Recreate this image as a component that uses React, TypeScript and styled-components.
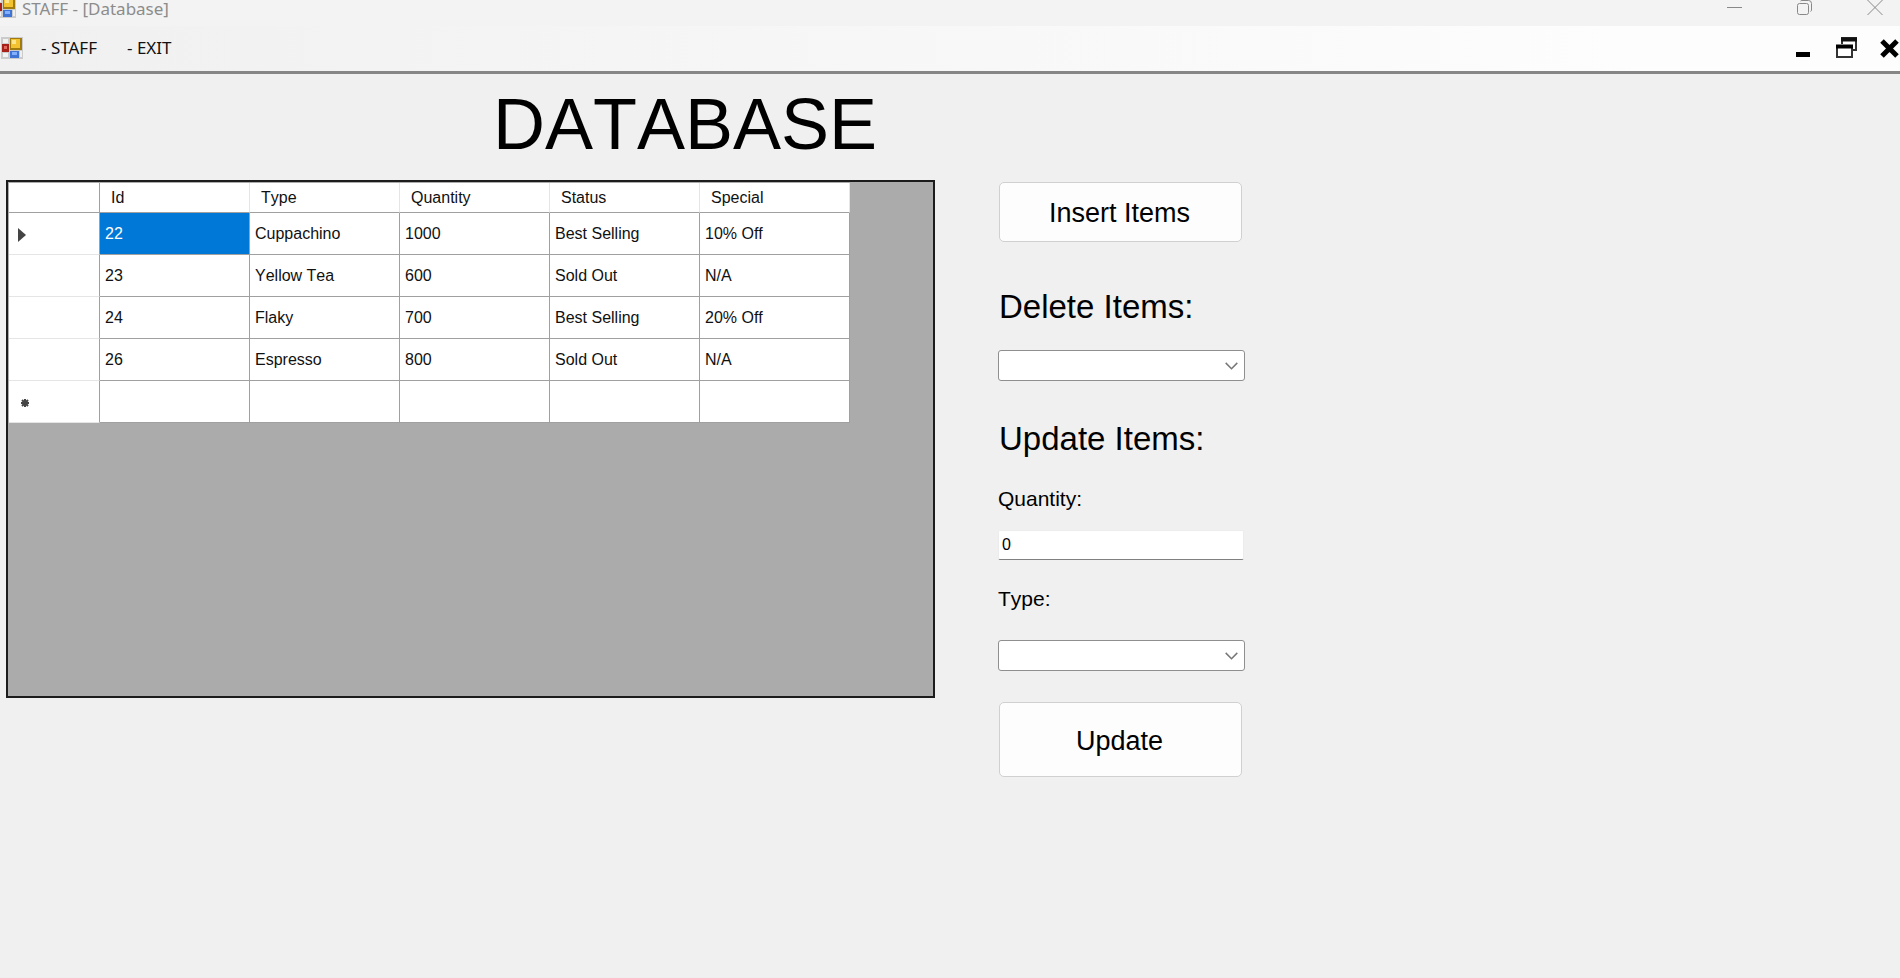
import React from "react";
import styled, { createGlobalStyle } from "styled-components";

const sans = `"Liberation Sans", Arial, sans-serif`;
const ui = `"Noto Sans", "Open Sans", sans-serif`;

const GlobalStyle = createGlobalStyle`
  *, *::before, *::after { box-sizing: border-box; }
  body { margin: 0; background: #f0f0f0; color: #000; font-family: ${sans}; font-kerning: none; }
  button, input, select { font: inherit; color: inherit; font-kerning: inherit; }
`;

const Window = styled.div`
  min-height: 100vh;
  background: #f0f0f0;
`;

const TitleBar = styled.header`
  display: flex;
  align-items: flex-start;
  height: 26px;
  padding-right: 17px;
  background: #f3f3f3;
`;

const TitleIcon = styled.span`
  display: flex;
  margin: -4px 6px 0 -6px;
`;

const WindowTitle = styled.span`
  flex: 1;
  font: 17px/18px ${ui};
  color: #8c8c8c;
`;

const Controls = styled.div<{ $gap: number }>`
  display: flex;
  align-items: flex-start;
  gap: ${({ $gap }) => $gap}px;
  margin-left: auto;
`;

const IconButton = styled.button`
  display: flex;
  padding: 0;
  border: 0;
  background: none;
`;

const MenuBar = styled.nav`
  display: flex;
  align-items: center;
  height: 48px;
  padding: 0 1px 2px;
  background: linear-gradient(to right, #f0f0f0, #fdfdfd 86%);
  border-bottom: 3px solid #868686;
`;

const MenuLink = styled.a`
  margin-left: 18px;
  padding-right: 6px;
  font: 17px/22px ${ui};
  color: #111;
  text-decoration: none;
  & + & {
    margin-left: 24px;
  }
`;

const Heading = styled.h1`
  margin: 0;
  padding: 9px 0 15px 493px;
  font-size: 72px;
  font-weight: 400;
  line-height: 82px;
`;

const Content = styled.main`
  display: grid;
  grid-template-columns: minmax(0, 929px) 247px;
  column-gap: 63px;
  align-items: start;
  padding: 0 6px;
`;

const GridPanel = styled.section`
  min-height: 518px;
  border: 2px solid #1c1c1c;
  padding: 1px;
  background: #ababab;
`;

const DataTable = styled.table`
  border-collapse: separate;
  border-spacing: 0;
  table-layout: fixed;
  width: 841px;
  background: #fff;
  font-size: 16px;
  line-height: 20px;
  color: #111;
`;

const ColumnHeader = styled.th<{ $corner?: boolean }>`
  width: ${({ $corner }) => ($corner ? 91 : 150)}px;
  height: 30px;
  padding: 1px 0 0 11px;
  border-right: 1px solid ${({ $corner }) => ($corner ? "#a0a0a0" : "#e5e5e5")};
  border-bottom: 1px solid #a0a0a0;
  font-weight: 400;
  text-align: left;
`;

const RowHeader = styled.th`
  height: 42px;
  padding: 2px 0 0 8px;
  border-right: 1px solid #a0a0a0;
  border-bottom: 1px solid #e5e5e5;
  text-align: left;
  svg {
    display: block;
  }
`;

const Cell = styled.td<{ $selected?: boolean }>`
  height: 42px;
  padding: 1px 0 0 5px;
  border-right: 1px solid #a0a0a0;
  border-bottom: 1px solid #a0a0a0;
  background: ${({ $selected }) => ($selected ? "#0078d7" : "#fff")};
  color: ${({ $selected }) => ($selected ? "#fff" : "inherit")};
`;

const Form = styled.form`
  display: flex;
  flex-direction: column;
  padding-top: 2px;
`;

const PushButton = styled.button<{ $height: number }>`
  height: ${({ $height }) => $height}px;
  margin: 0 3px 0 1px;
  padding: 2px 2px 0 0;
  border: 1px solid #d0d0d0;
  border-radius: 5px;
  background: #fdfdfd;
  font-size: 27px;
  line-height: 32px;
`;

const Field = styled.div<{ $top: number; $gap: number }>`
  display: flex;
  flex-direction: column;
  gap: ${({ $gap }) => $gap}px;
  margin-top: ${({ $top }) => $top}px;
`;

const SectionLabel = styled.label`
  padding-left: 1px;
  font-size: 33px;
  line-height: 38px;
`;

const SectionTitle = styled.h2`
  margin: 39px 0 0;
  padding-left: 1px;
  font-size: 33px;
  font-weight: 400;
  line-height: 38px;
`;

const FieldLabel = styled.label`
  font-size: 21px;
  line-height: 24px;
`;

const SelectBox = styled.div`
  position: relative;
  display: flex;
  svg {
    position: absolute;
    right: 7px;
    top: 12px;
    pointer-events: none;
  }
`;

const Select = styled.select`
  width: 100%;
  height: 31px;
  padding: 0 28px 0 4px;
  appearance: none;
  border: 1px solid #8f8f8f;
  border-radius: 3px;
  background: #fff;
  font-size: 16px;
`;

const TextInput = styled.input`
  height: 30px;
  margin: 0 1px 0 0;
  padding: 0 3px;
  border: 1px solid #ececec;
  border-bottom: 1px solid #808080;
  border-radius: 2px;
  background: #fff;
  font-size: 16px;
`;

const FormIcon = () => (
  <svg width="22" height="22" viewBox="0 0 22 22" aria-hidden="true">
    <rect width="22" height="22" fill="#cbcbcb" />
    <path d="M2 2h5v4H2zM2 16h5v4H2z" fill="#f2f2f2" />
    <rect x="1" y="7" width="7" height="8" fill="#a8201a" />
    <rect x="3" y="9" width="3" height="3" fill="#e0685c" />
    <rect x="9" y="1" width="12" height="12" fill="#a07c10" />
    <rect x="10" y="2" width="9" height="9" fill="#f3c230" />
    <rect x="11" y="3" width="4" height="4" fill="#ffe58a" />
    <rect x="9" y="14" width="9" height="7" fill="#3f74d4" />
    <rect x="11" y="15" width="5" height="3" fill="#82b0ff" />
    <path d="M19 14h2v6h-2z" fill="#efefef" />
  </svg>
);

const Chevron = () => (
  <svg width="13" height="8" viewBox="0 0 13 8" fill="none" stroke="#777" strokeWidth="1.5" aria-hidden="true">
    <path d="M.7.9l5.8 5.8L12.3.9" />
  </svg>
);

const columns = ["Id", "Type", "Quantity", "Status", "Special"];
const rows = [
  ["22", "Cuppachino", "1000", "Best Selling", "10% Off"],
  ["23", "Yellow Tea", "600", "Sold Out", "N/A"],
  ["24", "Flaky", "700", "Best Selling", "20% Off"],
  ["26", "Espresso", "800", "Sold Out", "N/A"],
  ["", "", "", "", ""],
];

const RowMarker = ({ index }: { index: number }) => {
  if (index === 0)
    return (
      <svg width="12" height="14" viewBox="0 0 12 14" aria-hidden="true">
        <path d="M1 0v14l8-7z" fill="#444" />
      </svg>
    );
  if (index === rows.length - 1)
    return (
      <svg width="16" height="10" viewBox="0 0 16 10" stroke="#444" strokeWidth="2" aria-hidden="true">
        <path d="M8 1v8M4 5h8M5 2l6 6M11 2L5 8" />
      </svg>
    );
  return null;
};

export default function App() {
  return (
    <Window>
      <GlobalStyle />
      <TitleBar>
        <TitleIcon><FormIcon /></TitleIcon>
        <WindowTitle>STAFF - [Database]</WindowTitle>
        <Controls $gap={54}>
          <IconButton aria-label="Minimize window">
            <svg width="16" height="16" stroke="#888"><path d="M0 7.5h15" /></svg>
          </IconButton>
          <IconButton aria-label="Restore window">
            <svg width="16" height="16" fill="none" stroke="#888">
              <rect x=".5" y="3.5" width="11" height="11" rx="2" />
              <path d="M3.5 1Q4 .5 5 .5h6.5q3 0 3 3V10q0 1-1 1.5" />
            </svg>
          </IconButton>
          <IconButton aria-label="Close window">
            <svg width="16" height="16" stroke="#888"><path d="M.5 0l15 15M15.5 0l-15 15" /></svg>
          </IconButton>
        </Controls>
      </TitleBar>
      <MenuBar>
        <FormIcon />
        <MenuLink href="#staff">- STAFF</MenuLink>
        <MenuLink href="#exit">- EXIT</MenuLink>
        <Controls $gap={22}>
          <IconButton aria-label="Minimize form">
            <svg width="20" height="22"><rect x="2" y="15" width="14" height="5" fill="#000" /></svg>
          </IconButton>
          <IconButton aria-label="Restore form">
            <svg width="22" height="22" fill="none" stroke="#333" strokeWidth="2">
              <path d="M6 7V1h14v12h-4" />
              <path d="M5 2.5h16" stroke="#111" strokeWidth="4" />
              <rect x="1" y="9" width="15" height="11" fill="#fff" />
              <path d="M0 9.5h17" stroke="#000" strokeWidth="4" />
            </svg>
          </IconButton>
          <IconButton aria-label="Close form">
            <svg width="19" height="22" stroke="#000" strokeWidth="5"><path d="M2 4l15 15M17 4L2 19" /></svg>
          </IconButton>
        </Controls>
      </MenuBar>
      <Heading>DATABASE</Heading>
      <Content>
        <GridPanel aria-label="Items">
          <DataTable>
            <thead>
              <tr>
                <ColumnHeader $corner aria-label="Row" />
                {columns.map((name) => (
                  <ColumnHeader key={name} scope="col">{name}</ColumnHeader>
                ))}
              </tr>
            </thead>
            <tbody>
              {rows.map((row, r) => (
                <tr key={r}>
                  <RowHeader scope="row"><RowMarker index={r} /></RowHeader>
                  {row.map((value, c) => (
                    <Cell key={c} $selected={r === 0 && c === 0}>{value}</Cell>
                  ))}
                </tr>
              ))}
            </tbody>
          </DataTable>
        </GridPanel>
        <Form onSubmit={(e) => e.preventDefault()}>
          <PushButton type="button" $height={60}>Insert Items</PushButton>
          <Field $top={46} $gap={24}>
            <SectionLabel htmlFor="delete-item">Delete Items:</SectionLabel>
            <SelectBox>
              <Select id="delete-item"><option value="" /></Select>
              <Chevron />
            </SelectBox>
          </Field>
          <SectionTitle>Update Items:</SectionTitle>
          <Field $top={29} $gap={19}>
            <FieldLabel htmlFor="quantity">Quantity:</FieldLabel>
            <TextInput id="quantity" defaultValue="0" />
          </Field>
          <Field $top={27} $gap={29}>
            <FieldLabel htmlFor="type">Type:</FieldLabel>
            <SelectBox>
              <Select id="type"><option value="" /></Select>
              <Chevron />
            </SelectBox>
          </Field>
          <Field $top={31} $gap={0}>
            <PushButton type="submit" $height={75}>Update</PushButton>
          </Field>
        </Form>
      </Content>
    </Window>
  );
}
